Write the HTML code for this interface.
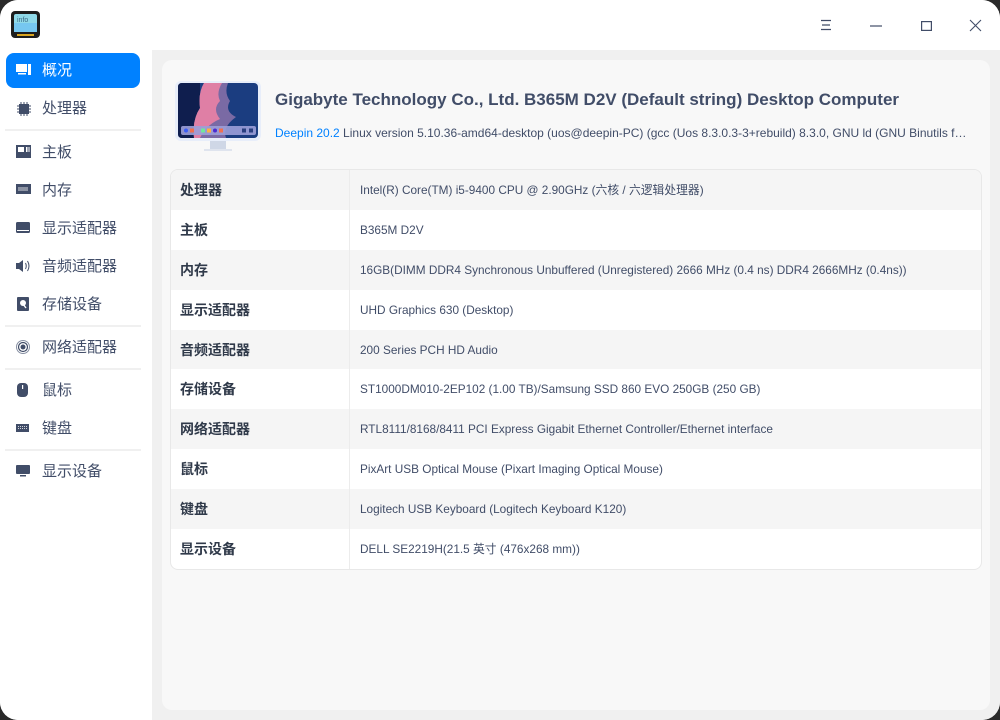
<!DOCTYPE html>
<html><head><meta charset="utf-8"><style>
*{margin:0;padding:0;box-sizing:border-box}
html,body{width:1000px;height:720px;overflow:hidden;background:#2a2a2a;font-family:"Liberation Sans","Noto Sans CJK SC",sans-serif}
.win{position:absolute;left:0;top:0;width:1000px;height:720px;background:#fff;border-radius:18px;overflow:hidden}
.title{position:absolute;left:0;top:0;width:1000px;height:50px;background:#fff}
.side{position:absolute;left:0;top:50px;width:152px;height:670px;background:#fff}
.item{position:absolute;left:6px;width:134px;height:35px;font-size:15px;color:#414d68;line-height:35px;padding-left:36px}
.item.sel{background:#0081ff;color:#fff;border-radius:8px}
.item svg{position:absolute;left:10px;top:10px}
.sep{position:absolute;left:5px;width:136px;height:2px;background:#f0f0f0}
.main{position:absolute;left:152px;top:50px;width:848px;height:670px;background:#f0f0f0}
.card{position:absolute;left:10px;top:10px;width:828px;height:650px;background:#f8f8f8;border-radius:10px}
.h1{position:absolute;left:275px;top:90px;font-size:17px;font-weight:bold;color:#414d68;white-space:nowrap}
.sub{position:absolute;left:275px;top:126px;font-size:12px;color:#414d68;white-space:nowrap;width:705px;overflow:hidden}
.sub b{font-weight:normal;color:#0081ff}
table{position:absolute;left:170px;top:169px;width:812px;border-collapse:separate;border-spacing:0;border:1px solid #e8e8e8;border-radius:8px;overflow:hidden;background:#fff}
td{height:39.9px;font-size:11.8px;color:#414d68;padding-left:10px;white-space:nowrap}
td:first-child{width:179px;font-size:14px;font-weight:bold;color:#303a4a;border-right:1px solid #ececec;padding-left:9px}
tr:nth-child(odd) td{background:#f5f5f5}
</style></head><body><div class="win">
<div class="title">
<svg style="position:absolute;left:11px;top:11px" width="29" height="27" viewBox="0 0 29 27"><rect x="0" y="0" width="29" height="27" rx="4" fill="#1d1d1d"/><rect x="3" y="3" width="23" height="18" rx="2" fill="#8fd9e8"/><rect x="3" y="12" width="23" height="9" fill="#76c7f0"/><text x="6" y="11" font-size="7" fill="#3b6b87" font-family="Liberation Sans">info</text><rect x="6" y="23" width="17" height="2" fill="#d9a520"/></svg>
<svg style="position:absolute;left:820px;top:19px" width="12" height="12"><path d="M1 1.5h10M2 6h8M1 10.5h10" stroke="#414d68" stroke-width="1.2"/></svg>
<svg style="position:absolute;left:870px;top:25px" width="12" height="2"><path d="M0 1h12" stroke="#414d68" stroke-width="1.2"/></svg>
<svg style="position:absolute;left:921px;top:21px" width="11" height="10"><rect x=".6" y=".6" width="9.8" height="8.8" fill="none" stroke="#414d68" stroke-width="1.2"/></svg>
<svg style="position:absolute;left:969px;top:19px" width="13" height="13"><path d="M1 1l11 11M12 1L1 12" stroke="#414d68" stroke-width="1.1"/></svg>
</div>
<div class="side">
<div class="item sel" style="top:3px"><svg width="16" height="14"><rect x="0" y="1" width="11" height="8" fill="#fff"/><rect x="2" y="10" width="8" height="1.5" fill="#fff"/><rect x="12" y="1" width="3" height="11" fill="#fff"/></svg>概况</div>
<div class="item" style="top:41px"><svg width="16" height="16"><rect x="3" y="3" width="10" height="10" fill="#414d68"/><path d="M5 1v2M8 1v2M11 1v2M5 13v2M8 13v2M11 13v2M1 5h2M1 8h2M1 11h2M13 5h2M13 8h2M13 11h2" stroke="#414d68"/></svg>处理器</div>
<div class="sep" style="top:79px"></div>
<div class="item" style="top:85px"><svg width="16" height="14"><rect x="0" y="0" width="15" height="13" fill="#414d68"/><rect x="2" y="2" width="6" height="5" fill="#fff"/><rect x="10" y="2" width="1.5" height="5" fill="#fff"/><rect x="12.5" y="2" width="1" height="5" fill="#fff"/></svg>主板</div>
<div class="item" style="top:123px"><svg width="16" height="14"><rect x="0" y="1" width="15" height="10" fill="#414d68"/><path d="M3 4v4M5 4v4M7 4v4M9 4v4M11 4v4" stroke="#fff" stroke-width=".8"/></svg>内存</div>
<div class="item" style="top:161px"><svg width="16" height="14"><rect x="0" y="1" width="14" height="11" rx="1.5" fill="#414d68"/><rect x="1" y="9" width="12" height="1" fill="#fff"/></svg>显示适配器</div>
<div class="item" style="top:199px"><svg width="16" height="14"><path d="M0 4h3l4-3v12l-4-3H0z" fill="#414d68"/><path d="M9.5 4q1.5 3 0 6M11.5 2q3 5 0 10" stroke="#414d68" fill="none"/></svg>音频适配器</div>
<div class="item" style="top:237px"><svg width="16" height="14"><rect x="1" y="0" width="12" height="14" rx="1" fill="#414d68"/><circle cx="7" cy="6" r="3" fill="#fff"/><path d="M7 7l3 4" stroke="#fff" stroke-width="1.4"/></svg>存储设备</div>
<div class="sep" style="top:275px"></div>
<div class="item" style="top:280px"><svg width="16" height="14"><circle cx="7" cy="7" r="2.5" fill="#414d68"/><circle cx="7" cy="7" r="4.5" fill="none" stroke="#414d68" stroke-width="1.2"/><circle cx="7" cy="7" r="6.5" fill="none" stroke="#8790a3" stroke-width="1"/></svg>网络适配器</div>
<div class="sep" style="top:318px"></div>
<div class="item" style="top:323px"><svg width="16" height="14"><rect x="1" y="0" width="11" height="14" rx="4" fill="#414d68"/><rect x="6" y="2" width="1.2" height="4" fill="#fff"/></svg>鼠标</div>
<div class="item" style="top:361px"><svg width="16" height="14"><rect x="0" y="3" width="13" height="8" fill="#414d68"/><path d="M2 5.5h9M2 7.5h9" stroke="#fff" stroke-width=".8" stroke-dasharray="1 1"/></svg>键盘</div>
<div class="sep" style="top:399px"></div>
<div class="item" style="top:404px"><svg width="16" height="14"><rect x="0" y="1" width="14" height="9" rx="1" fill="#414d68"/><rect x="4" y="11" width="6" height="1.5" fill="#414d68"/></svg>显示设备</div>
</div>
<div class="main"><div class="card"></div></div>
<svg style="position:absolute;left:174px;top:80px" width="88" height="76" viewBox="0 0 88 76"><rect x="36" y="61" width="16" height="8" fill="#cfd7e6"/><rect x="30" y="69" width="28" height="2" fill="#dfe4ee"/><rect x="1" y="1" width="86" height="60" rx="6" fill="#e8eefa"/><rect x="4" y="3" width="80" height="55" rx="4" fill="#1b3d80"/><path d="M4 7q0-4 4-4h18v55H8q-4 0-4-4z" fill="#0f1e4e"/><path d="M30 3h24q-4 10 2 18q-6 10 6 16q-14 10-10 21H20q-2-18 6-30q-2-15 4-25z" fill="#7a6aa4"/><path d="M30 3h18q-6 10-2 18q-8 8 0 18q-14 6-20 19H20q-2-18 6-30q-2-15 4-25z" fill="#df7fa5"/><rect x="7" y="46" width="75" height="9" rx="2" fill="#9c9ed8" opacity=".9"/><circle cx="12" cy="50.5" r="2" fill="#3b5df5"/><rect x="16" y="48.5" width="4" height="4" fill="#f07050"/><rect x="27" y="48.5" width="4" height="4" fill="#6fe89b"/><rect x="33" y="48.5" width="4" height="4" fill="#ffb040"/><circle cx="41" cy="50.5" r="2" fill="#4b2ad0"/><rect x="45" y="48.5" width="4" height="4" fill="#f07050"/><rect x="68" y="48.5" width="4" height="4" fill="#2a3f80"/><rect x="75" y="48.5" width="4" height="4" fill="#2a3f80"/></svg>
<div class="h1">Gigabyte Technology Co., Ltd. B365M D2V (Default string) Desktop Computer</div>
<div class="sub"><b>Deepin 20.2</b> Linux version 5.10.36-amd64-desktop (uos@deepin-PC) (gcc (Uos 8.3.0.3-3+rebuild) 8.3.0, GNU ld (GNU Binutils f…</div>
<table>
<tr><td>处理器</td><td>Intel(R) Core(TM) i5-9400 CPU @ 2.90GHz (六核 / 六逻辑处理器)</td></tr>
<tr><td>主板</td><td>B365M D2V</td></tr>
<tr><td>内存</td><td>16GB(DIMM DDR4 Synchronous Unbuffered (Unregistered) 2666 MHz (0.4 ns) DDR4 2666MHz (0.4ns))</td></tr>
<tr><td>显示适配器</td><td>UHD Graphics 630 (Desktop)</td></tr>
<tr><td>音频适配器</td><td>200 Series PCH HD Audio</td></tr>
<tr><td>存储设备</td><td>ST1000DM010-2EP102 (1.00 TB)/Samsung SSD 860 EVO 250GB (250 GB)</td></tr>
<tr><td>网络适配器</td><td>RTL8111/8168/8411 PCI Express Gigabit Ethernet Controller/Ethernet interface</td></tr>
<tr><td>鼠标</td><td>PixArt USB Optical Mouse (Pixart Imaging Optical Mouse)</td></tr>
<tr><td>键盘</td><td>Logitech USB Keyboard (Logitech Keyboard K120)</td></tr>
<tr><td>显示设备</td><td>DELL SE2219H(21.5 英寸 (476x268 mm))</td></tr>
</table>
</div></body></html>
